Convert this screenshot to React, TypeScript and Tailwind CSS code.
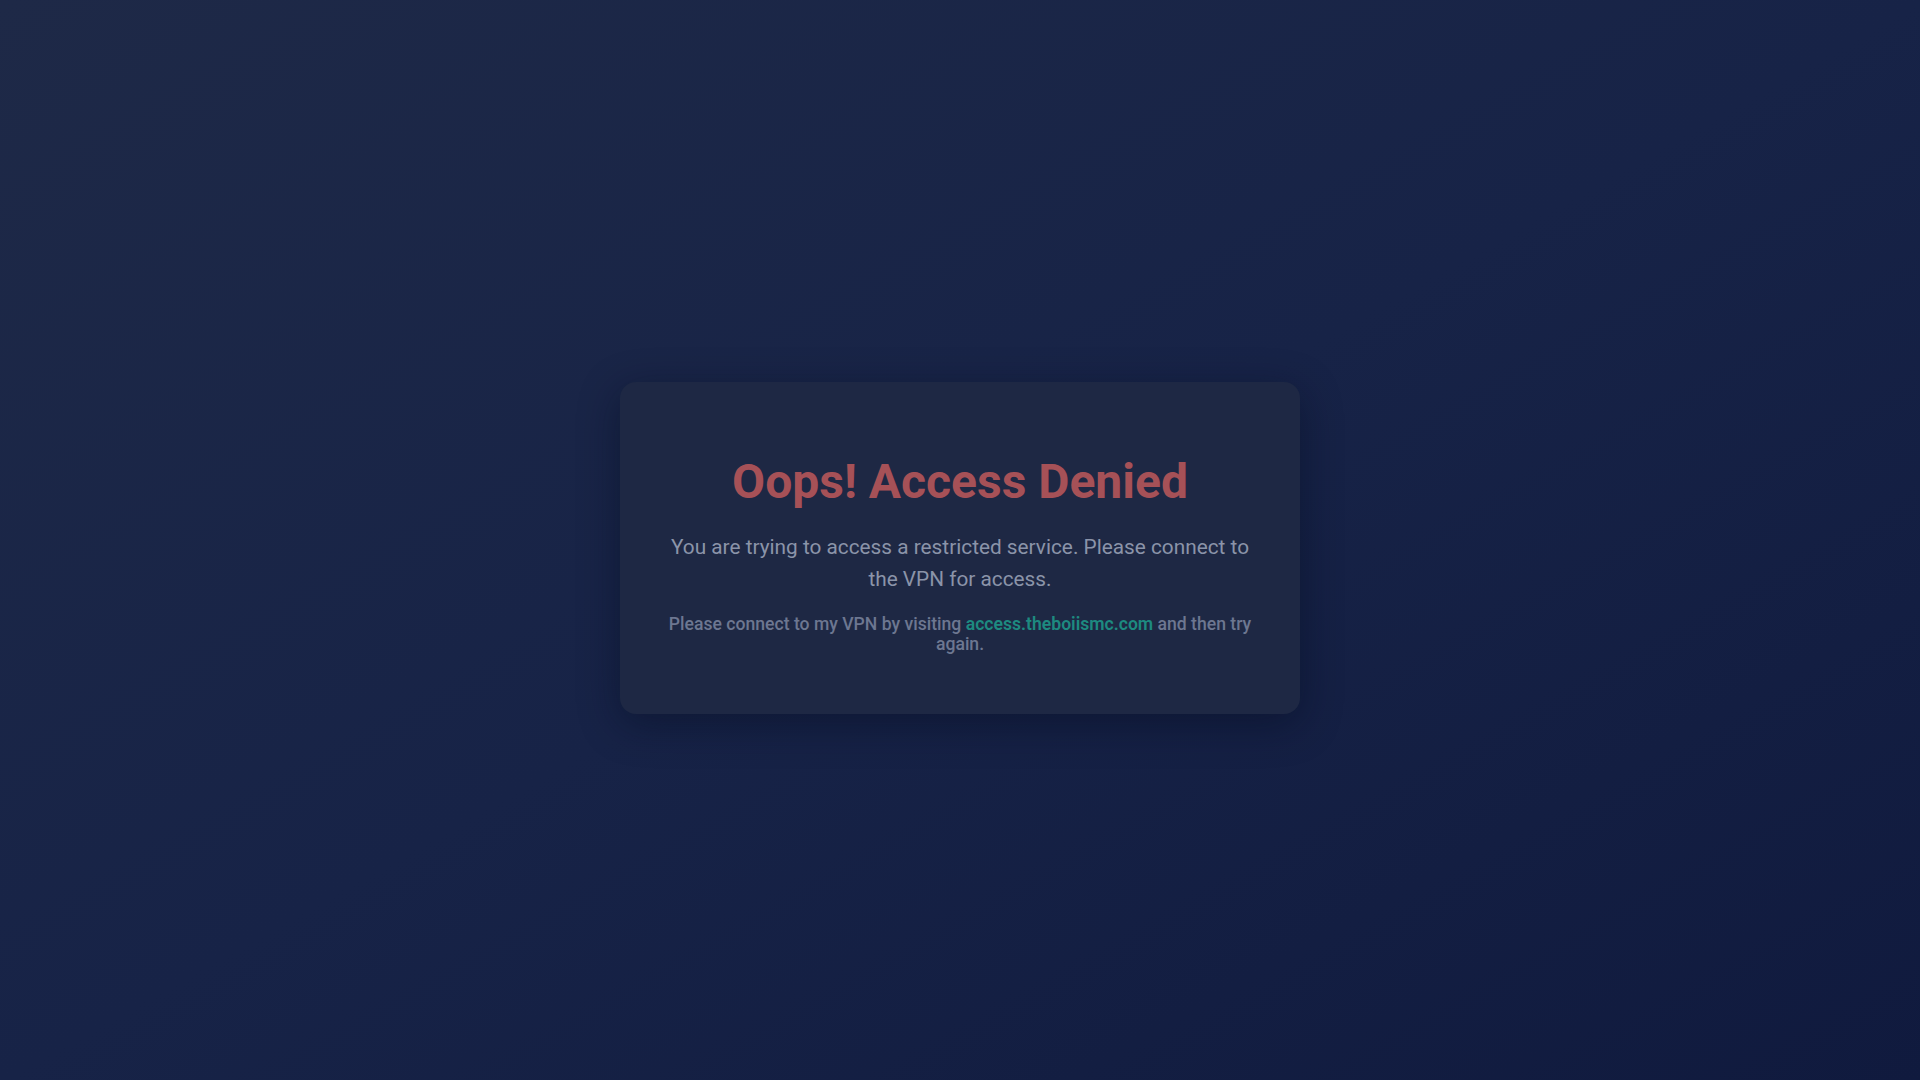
export default function App() {
  return (
    <main className="flex min-h-screen items-center justify-center bg-gradient-to-br from-[#1e2947] via-[#172347] to-[#101a3e] font-['Roboto',sans-serif]">
      <div className="mt-[16px] w-[680px] rounded-2xl bg-[#1e2844] px-12 pt-[71px] pb-[60px] text-center shadow-[0_10px_40px_rgba(5,10,30,0.45)]">
        <h1 className="text-[48px] leading-[1.2] font-bold text-[#a65157]">Oops! Access Denied</h1>
        <p className="mt-[20px] text-[20.8px] leading-8 text-[#8b94a9]">
          You are trying to access a restricted service. Please connect to the VPN for access.
        </p>
        <p className="mt-[19px] text-[17.6px] leading-[20px] font-medium text-[#6d7791]">
          Please connect to my VPN by visiting{" "}
          <a href="#" className="font-semibold text-[#1d8a80]">
            access.theboiismc.com
          </a>{" "}
          and then try again.
        </p>
      </div>
    </main>
  );
}
